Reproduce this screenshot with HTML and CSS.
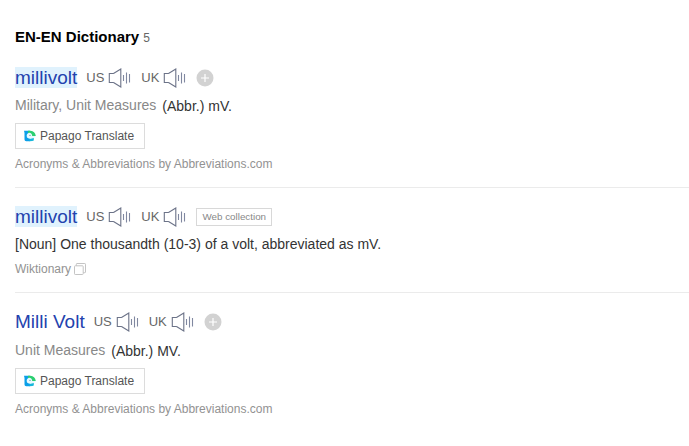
FILE: index.html
```
<!DOCTYPE html>
<html lang="en">
<head>
<meta charset="utf-8">
<title>EN-EN Dictionary</title>
<link rel="stylesheet" href="styles.css">
</head>
<body>
<svg class="defs" width="0" height="0" aria-hidden="true">
  <symbol id="speaker" viewBox="0 0 23 20">
    <path d="M5.5 5.5H1.3V14.5H5.5M5.5 5.5L12.8 1V19L5.5 14.5" fill="none" stroke="#6c7388" stroke-width="1.1"/>
    <path d="M15.5 7V13M18.5 4.5V15.5M21.5 6V14.5" fill="none" stroke="#8088a0" stroke-width="1.1"/>
  </symbol>
  <symbol id="plus" viewBox="0 0 18 18">
    <circle cx="9" cy="9" r="8.5" fill="#d2d2d2"/>
    <path d="M9 5V13M5 9H13" stroke="#fff" stroke-width="1.2"/>
  </symbol>
  <symbol id="papago" viewBox="0 0 12 12">
    <path d="M0 .7H6V11.3H2.2Q.5 11.3.5 9.5V3Z" fill="#0b9fe8"/>
    <path d="M4 .7H6.5Q11 1 11.8 6H7Q6.5 3.5 4 3Z" fill="#2ccf70"/>
    <path d="M5 2.8Q8.2 3 8.2 6H11.8L9.5 8.2H7.5Q5 9.3 3 7.6Q1.8 3.8 5 2.8Z" fill="#e8faff"/>
    <path d="M5.5 9L9.8 8V10.5Q9 11.3 5.5 11.3Z" fill="#16b7db"/>
    <circle cx="6" cy="5.4" r=".6" fill="#5b8fae"/>
  </symbol>
  <symbol id="copy" viewBox="0 0 12 12">
    <path d="M.5 3.5Q.5 2.8 1.2 2.8H8.5Q9.2 2.8 9.2 3.5V10.8Q9.2 11.5 8.5 11.5H1.2Q.5 11.5.5 10.8ZM2.3 2.8V1.2Q2.3.5 3 .5H10.8Q11.5.5 11.5 1.2V9Q11.5 9.7 10.8 9.7H9.2" fill="none" stroke="#c4c4c4"/>
  </symbol>
</svg>
<main class="dictionary">
  <h1 class="title">EN-EN Dictionary <span class="count">5</span></h1>

  <article class="entry">
    <div class="head">
      <a class="word"><mark>millivolt</mark></a>
      <span class="accent">US</span><svg class="speaker"><use href="#speaker"/></svg>
      <span class="accent">UK</span><svg class="speaker"><use href="#speaker"/></svg>
      <svg class="plus"><use href="#plus"/></svg>
    </div>
    <p class="meaning"><span class="field">Military, Unit Measures</span><span class="text">(Abbr.) mV.</span></p>
    <a class="papago"><svg class="papago-icon"><use href="#papago"/></svg>Papago Translate</a>
    <p class="source">Acronyms &amp; Abbreviations by Abbreviations.com</p>
  </article>

  <article class="entry second">
    <div class="head">
      <a class="word"><mark>millivolt</mark></a>
      <span class="accent">US</span><svg class="speaker"><use href="#speaker"/></svg>
      <span class="accent">UK</span><svg class="speaker"><use href="#speaker"/></svg>
      <span class="tag">Web collection</span>
    </div>
    <p class="meaning"><span class="definition">[Noun] One thousandth (10-3) of a volt, abbreviated as mV.</span></p>
    <p class="source">Wiktionary<svg class="copy"><use href="#copy"/></svg></p>
  </article>

  <article class="entry last">
    <div class="head">
      <a class="word">Milli Volt</a>
      <span class="accent">US</span><svg class="speaker"><use href="#speaker"/></svg>
      <span class="accent">UK</span><svg class="speaker"><use href="#speaker"/></svg>
      <svg class="plus"><use href="#plus"/></svg>
    </div>
    <p class="meaning"><span class="field">Unit Measures</span><span class="text">(Abbr.) MV.</span></p>
    <a class="papago"><svg class="papago-icon"><use href="#papago"/></svg>Papago Translate</a>
    <p class="source">Acronyms &amp; Abbreviations by Abbreviations.com</p>
  </article>
</main>
</body>
</html>
```
FILE: styles.css
```
* { box-sizing: border-box; }
body {
  margin: 0;
  background: #fff;
  font-family: "Liberation Sans", Arial, sans-serif;
  overflow: hidden;
}
.defs { display: none; }
.dictionary { padding: 27px 0 0 15px; }
.title {
  margin: 0 0 20px;
  font-size: 15px;
  line-height: 20px;
  color: #000;
}
.count { font-size: 12px; font-weight: 400; color: #666; }
.entry {
  height: 120px;
  margin-bottom: 19px;
  border-bottom: 1px solid #ebebeb;
}
.entry.second { height: 86px; }
.entry.last { margin-bottom: 0; border-bottom: 0; }
.head { display: flex; align-items: center; height: 20px; }
.word {
  margin-right: 9px;
  font-size: 19px;
  line-height: 20px;
  color: #2342ae;
  white-space: nowrap;
}
.word mark {
  display: block;
  margin-top: -1px;
  padding-top: 1px;
  background: #e0f2fd;
  color: inherit;
}
.accent { width: 18px; font-size: 13px; line-height: 20px; color: #666; }
.speaker { width: 23px; height: 20px; margin: 0 10px 0 4px; flex: none; }
.plus { width: 18px; height: 18px; flex: none; }
.tag {
  width: 76px;
  height: 18px;
  border: 1px solid #d8d8d8;
  font-size: 9.8px;
  line-height: 16px;
  text-align: center;
  white-space: nowrap;
  color: #888;
}
.meaning {
  display: flex;
  height: 20px;
  margin: 7px 0 0;
  font-size: 14px;
  line-height: 20px;
  color: #333;
}
.last .meaning { margin-top: 8px; }
.field { margin-right: 6px; color: #888; }
.text { padding-top: 1px; }
.papago {
  display: flex;
  align-items: center;
  width: 130px;
  height: 26px;
  margin-top: 8px;
  padding-left: 8px;
  border: 1px solid #dcdcdc;
  font-size: 12px;
  color: #555;
}
.papago-icon { width: 12px; height: 12px; margin-right: 4px; }
.source {
  display: flex;
  align-items: center;
  margin: 6px 0 0;
  font-size: 12px;
  line-height: 18px;
  color: #929292;
}
.copy { width: 12px; height: 12px; margin-left: 3px; }
```
